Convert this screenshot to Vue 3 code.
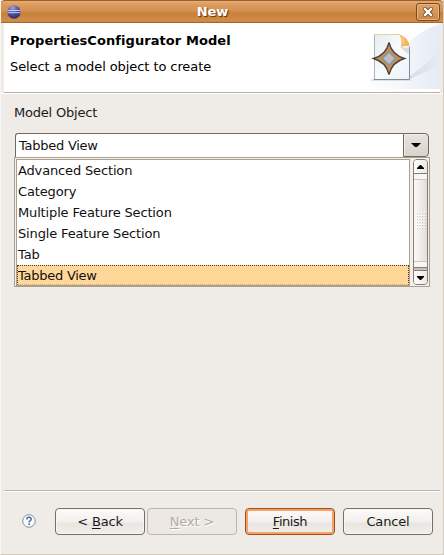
<script setup>
import { ref } from 'vue'

const options = [
  'Advanced Section',
  'Category',
  'Multiple Feature Section',
  'Single Feature Section',
  'Tab',
  'Tabbed View',
]
const selected = ref('Tabbed View')
const grip = Array.from({ length: 24 }, (_, i) => ({ x: (i % 4) * 2.5, y: Math.floor(i / 4) * 3 }))
</script>

<template>
  <div class="window">
    <header class="titlebar">
      <svg class="logo" width="14" height="14" viewBox="0 0 14 14">
        <defs>
          <radialGradient id="orb" cx="0.4" cy="0.2" r="0.85">
            <stop offset="0" stop-color="#a3a2d4" />
            <stop offset="0.5" stop-color="#5554a0" />
            <stop offset="1" stop-color="#2b2566" />
          </radialGradient>
        </defs>
        <circle cx="7" cy="7" r="6.7" fill="url(#orb)" />
        <path d="M0.6 5.5H13.4M0.4 7.7H13.6" stroke="#c3cbec" stroke-width="1" />
      </svg>
      <span class="title">New</span>
      <button class="close" aria-label="Close">
        <svg width="10" height="10" viewBox="0 0 10 10">
          <path d="M2 2L8 8M8 2L2 8" stroke="#74431a" stroke-width="4" stroke-linecap="square" />
          <path d="M2 2L8 8M8 2L2 8" stroke="#fff" stroke-width="2.4" stroke-linecap="square" />
        </svg>
      </button>
    </header>

    <section class="banner">
      <div class="banner-text">
        <h1>PropertiesConfigurator Model</h1>
        <p>Select a model object to create</p>
      </div>
      <svg class="banner-art" width="75" height="66" viewBox="0 0 75 66">
        <defs>
          <linearGradient id="sky" x1="0" y1="0" x2="1" y2="0">
            <stop offset="0" stop-color="#fff" />
            <stop offset="0.5" stop-color="#f5f7fb" />
            <stop offset="1" stop-color="#e5eaf4" />
          </linearGradient>
          <linearGradient id="shade" x1="0" y1="0" x2="1" y2="0">
            <stop offset="0" stop-color="#c8cbdc" />
            <stop offset="1" stop-color="#e8ebf5" />
          </linearGradient>
          <linearGradient id="sheet" x1="0" y1="0" x2="1" y2="1">
            <stop offset="0" stop-color="#e5edf1" />
            <stop offset="0.5" stop-color="#f8fbfc" />
            <stop offset="1" stop-color="#edf3f8" />
          </linearGradient>
        </defs>
        <path d="M75 1C59 5 52 13 42 20L0 66H75Z" fill="url(#sky)" />
        <path d="M43 54Q55 47 75 28V43Q61 48 43 57Z" fill="url(#shade)" opacity="0.6" />
        <path d="M5 57.5L9 55H44L47 58H7Z" fill="#d3d7dd" opacity="0.7" />
        <path d="M9.5 11.5H35L44.5 23V56.5H9.5Z" fill="url(#sheet)" />
        <path d="M9.5 56V11.5" stroke="#a9b5b8" fill="none" />
        <path d="M10 11.5H35" stroke="#efcf98" fill="none" />
        <path d="M44.5 24V56.5H9" stroke="#77909a" fill="none" />
        <path d="M35 24L45 25L43 31Z" fill="#b9c2c9" opacity="0.5" />
        <path d="M34.5 11.5Q44 14.5 44.5 24Q40 21.5 36 24.5Q37.5 17 34.5 11.5Z" fill="#f7b45d" />
        <path d="M37 14Q39 17 38.5 21" stroke="#ffd08a" stroke-width="1.4" fill="none" />
        <path d="M24 19.5Q27 32 39.5 35.5Q27 39 24 51.5Q21 39 8.5 35.5Q21 32 24 19.5Z" fill="#c48d5b" stroke="#4a4038" stroke-width="1.3" />
        <path d="M24 27.5L32 35.5L24 43.5L16 35.5Z" fill="#929494" />
        <path d="M24 30L29.5 35.5L24 41L18.5 35.5Z" fill="#b9c0c3" />
      </svg>
    </section>

    <main class="body">
      <label>Model Object</label>
      <div class="combo">
        <div class="combo-value">{{ selected }}</div>
        <button class="combo-arrow" aria-label="Open list">
          <svg width="10" height="5" viewBox="0 0 10 5"><path d="M0 0H10L6 4H4Z" fill="#000" /></svg>
        </button>
      </div>
      <div class="popup">
        <ul class="list">
          <li v-for="item in options" :key="item" :class="{ active: item === selected }" @click="selected = item">{{ item }}</li>
        </ul>
        <div class="scrollbar">
          <div class="step up">
            <svg width="7" height="4" viewBox="0 0 7 4"><path d="M0 4V3L3 0H4L7 3V4Z" fill="#000" /></svg>
          </div>
          <div class="thumb">
            <svg width="10" height="18" viewBox="0 0 10 18">
              <g v-for="(dot, i) in grip" :key="i">
                <rect :x="dot.x" :y="dot.y" width="1.4" height="1.5" fill="#fff" />
                <rect :x="dot.x + 1" :y="dot.y + 1" width="1" height="1" fill="#cbc5be" />
              </g>
            </svg>
          </div>
          <div class="trough"></div>
          <div class="step down">
            <svg width="7" height="4" viewBox="0 0 7 4"><path d="M0 0V1L3 4H4L7 1V0Z" fill="#000" /></svg>
          </div>
        </div>
      </div>
    </main>

    <footer class="footer">
      <svg class="help" width="14" height="14" viewBox="0 0 15 15">
        <circle cx="7.5" cy="7.5" r="6.7" fill="#fbfbfc" stroke="#7487a5" />
        <path d="M5.2 5.8Q5.3 3.6 7.5 3.6Q9.8 3.6 9.8 5.5Q9.8 6.6 8.6 7.3Q7.6 7.9 7.6 9" fill="none" stroke="#4a6a96" stroke-width="1.6" />
        <rect x="6.8" y="10" width="1.7" height="1.7" fill="#4a6a96" />
      </svg>
      <button class="btn back"><span>&lt; <u>B</u>ack</span></button>
      <button class="btn next" disabled><span><u>N</u>ext &gt;</span></button>
      <button class="btn finish"><span><u>F</u>inish</span></button>
      <button class="btn cancel"><span>Cancel</span></button>
    </footer>
  </div>
</template>

<style>
body {
  background: #efebe7;
}
</style>

<style scoped>
.window {
  box-sizing: border-box;
  width: 444px;
  height: 555px;
  display: flex;
  flex-direction: column;
  overflow: hidden;
  background: #efebe7;
  border: 1px solid #d3cbbf;
  border-top: 0;
  border-left-color: #f8f6f3;
  font-family: "DejaVu Sans", sans-serif;
  font-size: 13px;
  color: #1a1a1a;
}
button {
  box-sizing: border-box;
  padding: 0;
  font: inherit;
  color: inherit;
}
svg {
  display: block;
  flex: none;
}
.titlebar {
  box-sizing: border-box;
  flex: none;
  height: 23px;
  margin: 0 -1px;
  padding: 0 4px 0 7px;
  display: flex;
  align-items: center;
  justify-content: space-between;
  border-top: 1px solid #9c5f2a;
  border-bottom: 1px solid #a96529;
  border-radius: 5px 5px 0 0;
  background: linear-gradient(#e6ad76 0, #dc9d60 3px, #d49150 10px, #c88039 12px, #d18c49 20px, #c27a35 22px);
}
.title {
  margin-right: 12px;
  line-height: 20px;
  font-weight: bold;
  color: #fff;
  text-shadow: 1px 1px 1px #5a3211;
}
.close {
  width: 24px;
  height: 18px;
  display: flex;
  align-items: center;
  justify-content: center;
  border: 1px solid #80481c;
  border-radius: 3px;
  background: linear-gradient(#dea46c, #ce8844);
  box-shadow: inset 0 0 0 1px #e4b383;
}
.banner {
  box-sizing: border-box;
  flex: none;
  height: 70px;
  margin: 0 3px;
  display: flex;
  justify-content: space-between;
  background: #fff;
  border-bottom: 1px solid #b8b0a8;
}
.banner-text {
  padding: 9px 0 0 6px;
}
h1,
p {
  margin: 0;
  font-size: 13px;
  line-height: 18px;
  white-space: nowrap;
  color: #000;
}
h1 {
  letter-spacing: 0.07px;
}
p {
  margin-top: 8px;
  letter-spacing: -0.08px;
}
.body {
  flex: 1;
  padding: 10px 13px 0;
  border-top: 1px solid #fff;
}
label {
  display: block;
  line-height: 18px;
  letter-spacing: -0.2px;
}
.combo {
  display: flex;
  width: 414px;
  height: 25px;
  margin: 11px 0 0 1px;
}
.combo-value {
  box-sizing: border-box;
  flex: 1;
  padding-left: 3px;
  line-height: 23px;
  letter-spacing: -0.25px;
  background: #fff;
  border: 1px solid #756a63;
  border-right: 0;
  border-radius: 3px 0 0 0;
  color: #111;
}
.combo-arrow {
  width: 26px;
  height: 24px;
  display: flex;
  align-items: center;
  justify-content: center;
  border: 1px solid #756a63;
  border-radius: 0 4px 4px 0;
  background: linear-gradient(#e8e3de, #d9d3cc);
  box-shadow: inset 1px 1px 0 #f0ece8;
}
.popup {
  box-sizing: border-box;
  width: 416px;
  height: 130px;
  margin-top: -1px;
  padding: 1px;
  display: flex;
  justify-content: space-between;
  position: relative;
  border: 1px solid #aaa092;
  background: #f2efec;
}
.list {
  box-sizing: border-box;
  width: 394px;
  height: 127px;
  margin: 0;
  padding: 0;
  list-style: none;
  background: #fff;
  border: 1px solid #aaa092;
  color: #111;
}
li {
  box-sizing: border-box;
  height: 21px;
  padding-left: 1px;
  line-height: 21px;
  letter-spacing: -0.15px;
}
li.active {
  height: 20px;
  padding-left: 0;
  line-height: 19px;
  letter-spacing: -0.25px;
  border: 1px dotted #4b3821;
  border-bottom-color: #dba75f;
  background: #ffd799;
}
.scrollbar {
  box-sizing: border-box;
  width: 15px;
  height: 126px;
  display: flex;
  flex-direction: column;
  border: 1px solid #877d74;
  border-radius: 4px;
  overflow: hidden;
  background: #efebe7;
}
.step {
  flex: none;
  height: 13px;
  display: flex;
  align-items: center;
  justify-content: center;
  background: linear-gradient(90deg, #fff, #ebe7e3);
}
.up {
  border-bottom: 1px solid #877d74;
}
.thumb {
  flex: 1;
  display: flex;
  align-items: center;
  justify-content: center;
  border-top: 5px solid #f8f6f4;
  border-bottom: 5px solid #f8f6f4;
  background: linear-gradient(90deg, #fbfaf9, #e2ddd8);
  box-shadow: inset 0 1px #ccc5bd, inset 0 -1px #ccc5bd;
}
.trough {
  height: 2px;
  background: #c8c0b3;
  border-top: 1px solid #877d74;
  border-bottom: 1px solid #877d74;
}
.footer {
  box-sizing: border-box;
  flex: none;
  height: 64px;
  margin: 0 3px;
  padding: 17px 6px 0 18px;
  display: flex;
  align-items: flex-start;
  border-top: 1px solid #bcb4ac;
  box-shadow: inset 0 1px #fff;
}
.help {
  margin: 6px 19px 0 0;
}
.btn {
  width: 90px;
  height: 27px;
  border: 1px solid #776d66;
  border-radius: 4px;
  background: linear-gradient(#fcfbfa 0, #f2efec 13px, #e8e4e0 14px, #f2efeb 100%);
  box-shadow: inset 0 0 0 1px #f8f6f4;
  line-height: 24px;
  letter-spacing: -0.15px;
}
.btn u {
  text-underline-offset: 2px;
  text-decoration-thickness: 1px;
}
.next {
  margin-left: 2px;
  border-color: #bdb5ad;
  background: #ece8e4;
  box-shadow: none;
  color: #b4aca4;
  text-shadow: 1px 1px #fff;
}
.finish {
  margin-left: 8px;
  border-color: #9c4f23;
  box-shadow: inset 0 0 0 2px #f9a066;
  letter-spacing: -0.45px;
}
.cancel {
  margin-left: 8px;
}
</style>
